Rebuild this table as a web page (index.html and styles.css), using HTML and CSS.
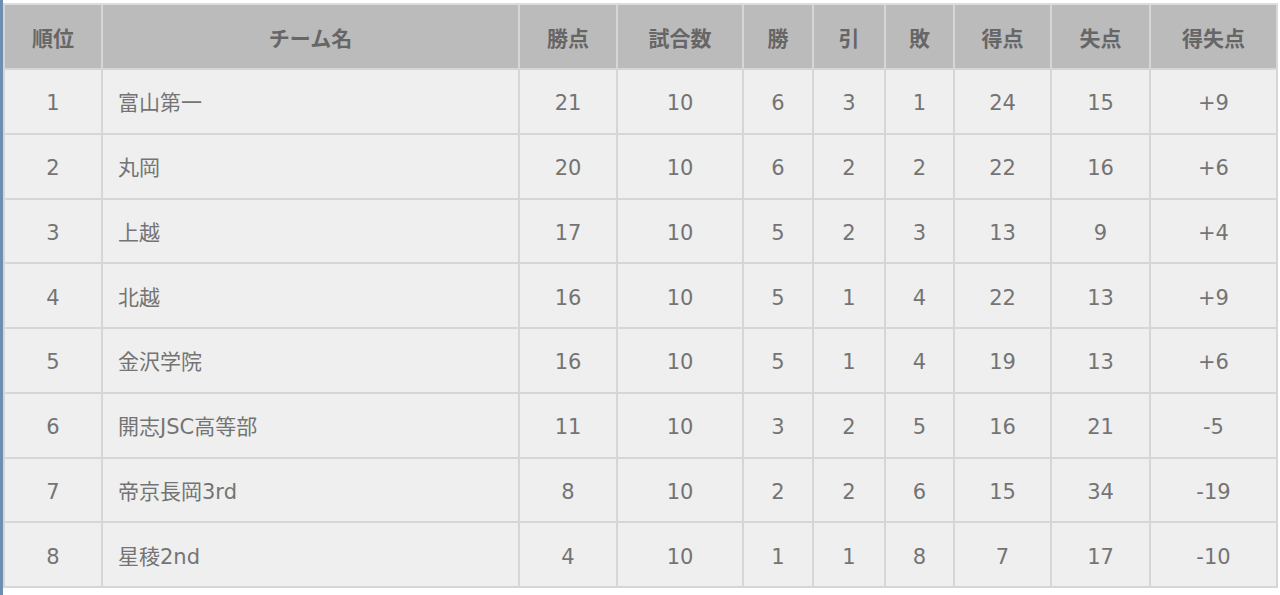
FILE: index.html
```html
<!DOCTYPE html>
<html lang="ja">
<head>
<meta charset="utf-8">
<title>順位表</title>
<link rel="stylesheet" href="styles.css">
</head>
<body>
<div class="page">
  <table class="standings">
    <colgroup>
      <col class="c-rank"><col class="c-team"><col class="c-pts"><col class="c-games"><col class="c-w"><col class="c-d"><col class="c-l"><col class="c-gf"><col class="c-ga"><col class="c-gd">
    </colgroup>
    <thead>
      <tr><th>順位</th><th>チーム名</th><th>勝点</th><th>試合数</th><th>勝</th><th>引</th><th>敗</th><th>得点</th><th>失点</th><th>得失点</th></tr>
    </thead>
    <tbody>
      <tr><td>1</td><td class="team">富山第一</td><td>21</td><td>10</td><td>6</td><td>3</td><td>1</td><td>24</td><td>15</td><td>+9</td></tr>
      <tr><td>2</td><td class="team">丸岡</td><td>20</td><td>10</td><td>6</td><td>2</td><td>2</td><td>22</td><td>16</td><td>+6</td></tr>
      <tr><td>3</td><td class="team">上越</td><td>17</td><td>10</td><td>5</td><td>2</td><td>3</td><td>13</td><td>9</td><td>+4</td></tr>
      <tr><td>4</td><td class="team">北越</td><td>16</td><td>10</td><td>5</td><td>1</td><td>4</td><td>22</td><td>13</td><td>+9</td></tr>
      <tr><td>5</td><td class="team">金沢学院</td><td>16</td><td>10</td><td>5</td><td>1</td><td>4</td><td>19</td><td>13</td><td>+6</td></tr>
      <tr><td>6</td><td class="team">開志JSC高等部</td><td>11</td><td>10</td><td>3</td><td>2</td><td>5</td><td>16</td><td>21</td><td>-5</td></tr>
      <tr><td>7</td><td class="team">帝京長岡3rd</td><td>8</td><td>10</td><td>2</td><td>2</td><td>6</td><td>15</td><td>34</td><td>-19</td></tr>
      <tr><td>8</td><td class="team">星稜2nd</td><td>4</td><td>10</td><td>1</td><td>1</td><td>8</td><td>7</td><td>17</td><td>-10</td></tr>
    </tbody>
  </table>
</div>
</body>
</html>
```
FILE: styles.css
```css
html, body {
  margin: 0;
  padding: 0;
  background: #ffffff;
}

.page {
  min-height: 595px;
  border-left: 3px solid #6f8db0;
  padding: 3px 0 0 0;
  box-sizing: border-box;
}

.standings {
  width: 1275px;
  table-layout: fixed;
  border-collapse: separate;
  border-spacing: 0;
  border-top: 2px solid #dcdcdc;
  border-left: 2px solid #d6d6d6;
  font-family: "DejaVu Sans", "Noto Sans CJK JP", sans-serif;
  font-size: 21px;
  color: #747474;
}

.c-rank { width: 98px; }
.c-team { width: 417px; }
.c-pts { width: 98px; }
.c-games { width: 126px; }
.c-w { width: 70px; }
.c-d { width: 72px; }
.c-l { width: 69px; }
.c-gf { width: 97px; }
.c-ga { width: 99px; }
.c-gd { width: 127px; }

.standings th,
.standings td {
  border-right: 2px solid #d6d6d6;
  border-bottom: 2px solid #d6d6d6;
  padding: 0;
  text-align: center;
  vertical-align: middle;
  box-sizing: border-box;
}

.standings th {
  background: #bbbbbb;
  color: #666666;
  font-family: "Noto Sans CJK JP", sans-serif;
  font-weight: bold;
  height: 65px;
}

.standings td {
  background: #efefef;
  font-weight: normal;
  height: 64.75px;
  padding-top: 4px;
  line-height: 26px;
}

.standings td.team {
  text-align: left;
  padding-left: 15px;
}
```
